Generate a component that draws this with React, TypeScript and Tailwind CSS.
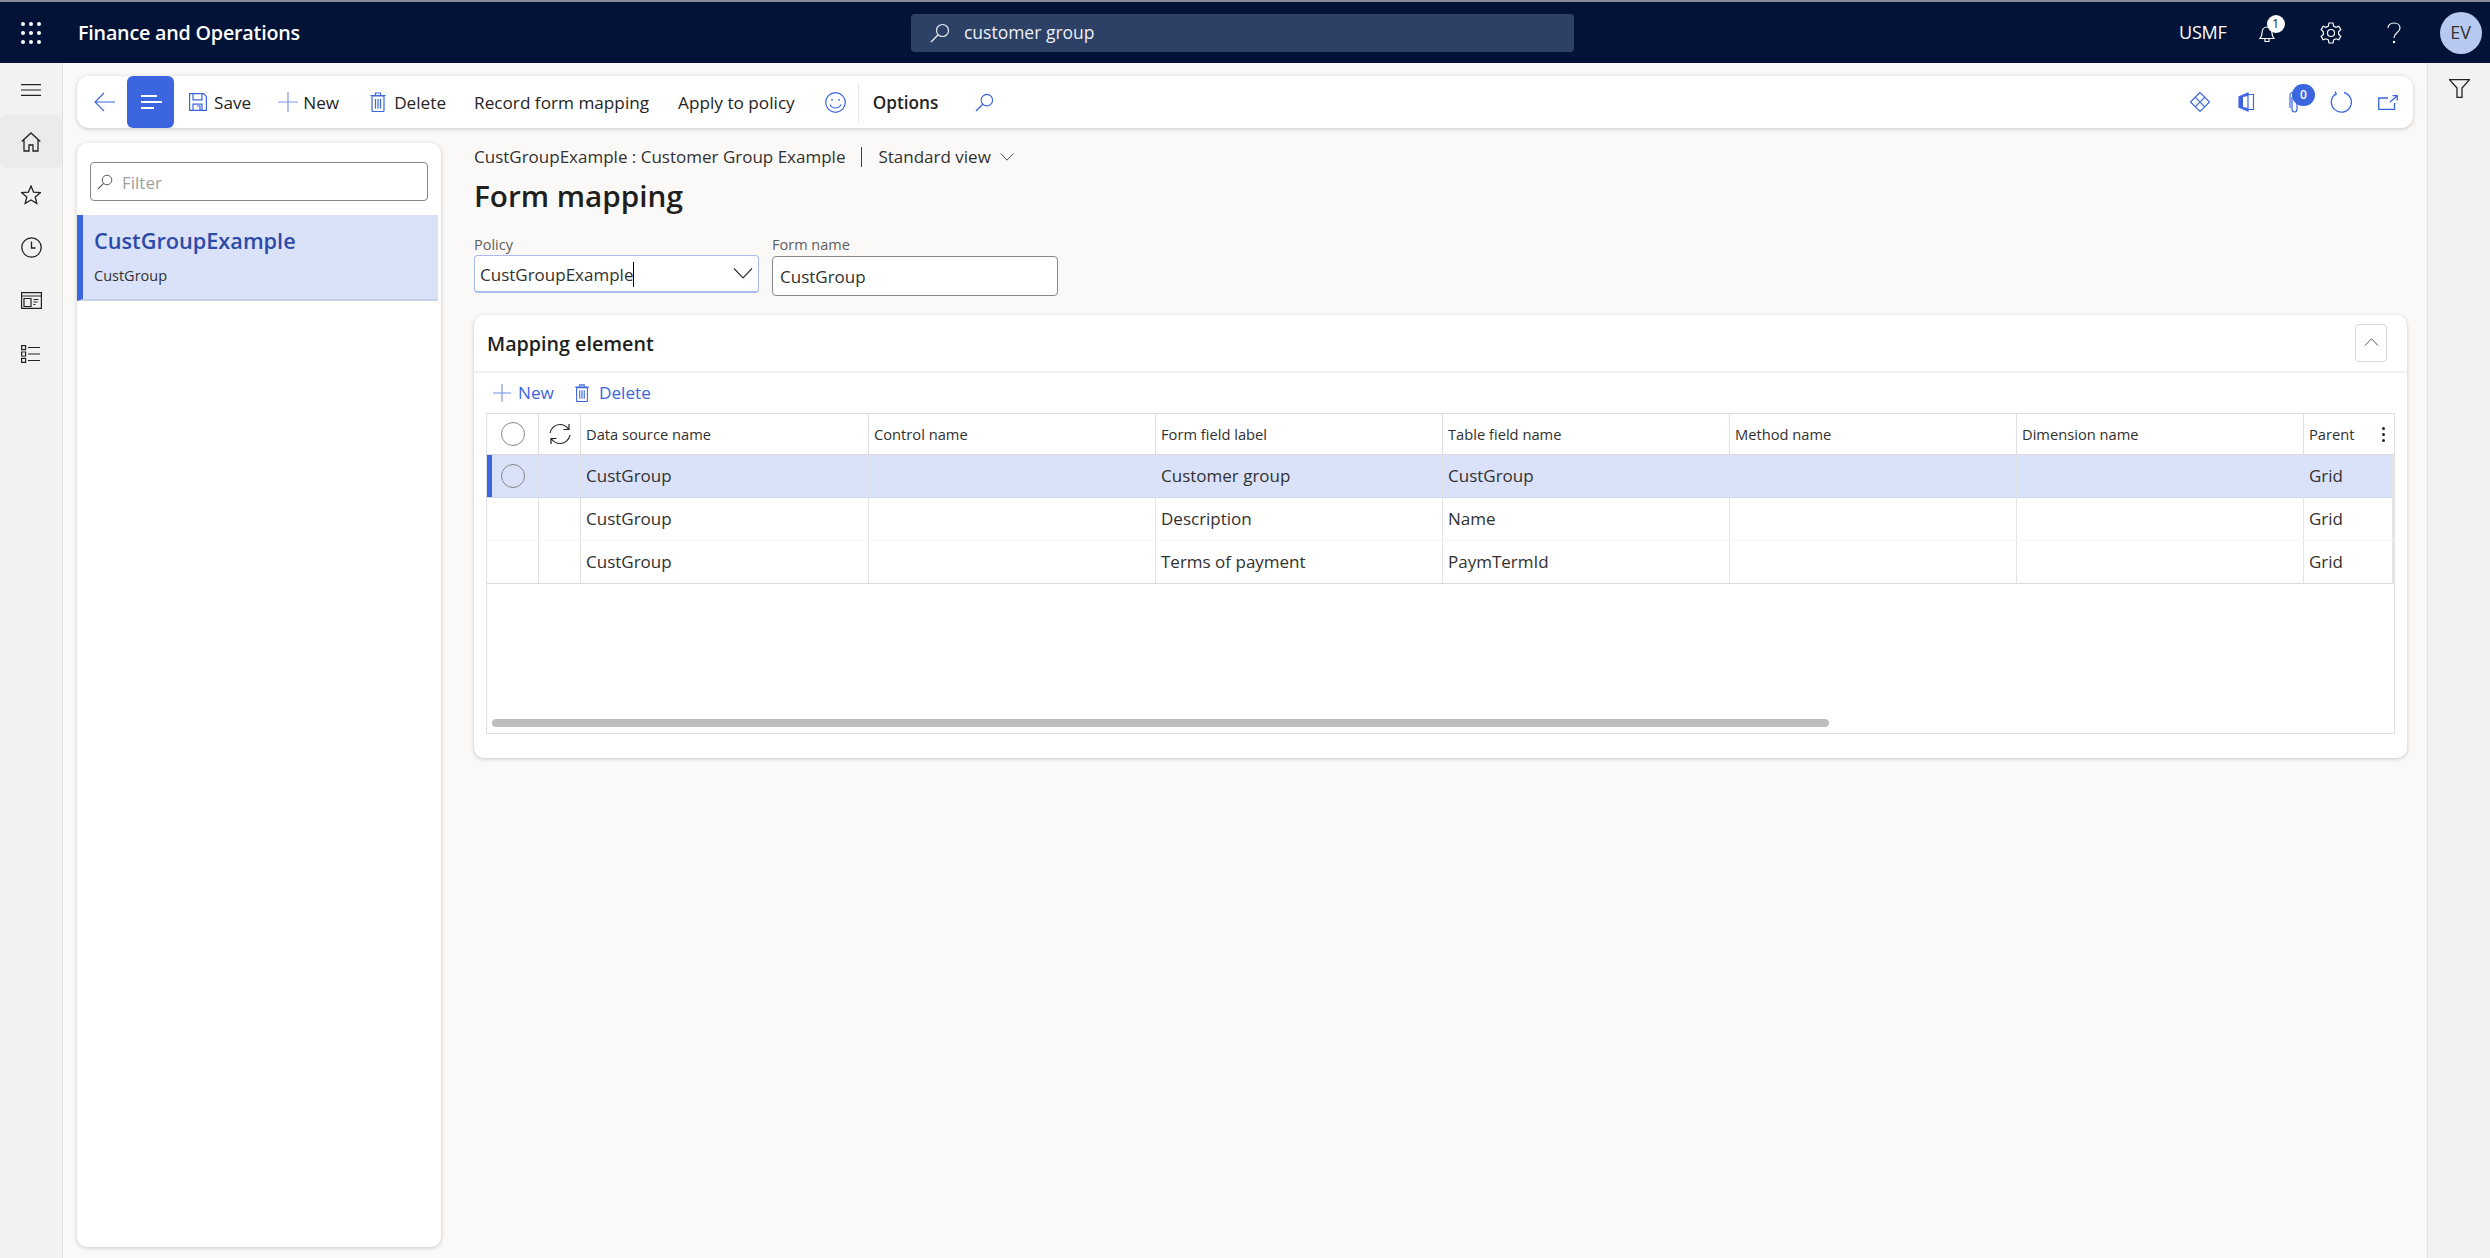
import type { ReactNode } from "react";

function Icon({ w, h, vb, className, children }: { w: number; h: number; vb: string; className?: string; children: ReactNode }) {
  return (
    <svg width={w} height={h} viewBox={vb} fill="none" stroke="currentColor" strokeWidth={1.2} className={className}>
      {children}
    </svg>
  );
}

const Search = ({ className, size = 20 }: { className?: string; size?: number }) => (
  <Icon w={size} h={size} vb="0 0 20 20" className={className}>
    <circle cx="12.5" cy="7.5" r="6" />
    <path d="M8.2 11.8 1 19" strokeWidth={1.4} />
  </Icon>
);

const Plus = ({ size = 20, className }: { size?: number; className?: string }) => (
  <Icon w={size} h={size} vb="0 0 20 20" className={className}>
    <path d="M10 0v20M0 10h20" />
  </Icon>
);

const Trash = ({ className, h = 20 }: { className?: string; h?: number }) => (
  <Icon w={16} h={h} vb="0 0 16 20" className={className}>
    <path d="M2 4h12v14.5a1 1 0 0 1-1 1H3a1 1 0 0 1-1-1zM.5 3.5h15M5.5 3V1h5v2M5.5 7v9.5M8 7v9.5M10.5 7v9.5" />
  </Icon>
);

const Save = () => (
  <Icon w={18} h={18} vb="0 0 18 18" className="text-[#3b66e0]">
    <path d="M.6.6h14l2.8 2.8v14H.6zM4 .8v6h9v-6M4 17.2v-6h9v6M8 13h3v4" />
  </Icon>
);

const Chevron = ({ w = 20, h = 11, up = false }: { w?: number; h?: number; up?: boolean }) => (
  <Icon w={w} h={h} vb="0 0 20 11">
    <path d={up ? "M1 10.5 10 1l9 9.5" : "M1 .5 10 10l9-9.5"} />
  </Icon>
);

function TopBar() {
  return (
    <header className="relative flex h-[63px] shrink-0 items-center border-t-2 border-[#8a8d96] bg-[#031338] text-white">
      <div className="ml-[21px] grid w-[20px] grid-cols-3 gap-x-[4px] gap-y-[5px]">
        {Array.from({ length: 9 }).map((_, i) => (
          <span key={i} className="h-[4px] w-[4px] rounded-full bg-white" />
        ))}
      </div>
      <span className="ml-[37px] text-[19.7px] font-semibold tracking-[-0.2px]">Finance and Operations</span>
      <div className="ml-[611px] flex h-[38px] w-[663px] items-center rounded-[4px] bg-[#2d4066] pl-[19px] text-[17.5px] text-[#eceff5]">
        <Search className="text-[#e8ebf2]" />
        <span className="ml-[14px]">customer group</span>
      </div>
      <span className="ml-[605px] text-[18px] tracking-[-0.2px]">USMF</span>
      <div className="relative ml-[32px] h-[18px] w-[16px]">
        <Icon w={16} h={19} vb="0 0 16 19">
          <path d="M1 14.5c1.4-1.5 2-2.5 2-5.5 0-3.5 2-6 5-6s5 2.500 5 6c0 3 .6 4 2 5.500zM6 15v2.500h4V15" />
        </Icon>
        <span className="absolute -top-[9px] left-[8px] flex h-[18px] w-[18px] items-center justify-center rounded-full bg-white text-[12px] text-[#222]">1</span>
      </div>
      <div className="ml-[45px]">
        <Icon w={22} h={22} vb="0 0 22 22">
          <circle cx="11" cy="11" r="3.500" />
          <path d="M9 1h4l.6 3 2.400 1.300 2.800-1 2 3.400-2.200 2 .1 2.700 2.100 2-2 3.400-2.800-1L13.600 18 13 21H9l-.6-3L6 16.800l-2.800 1-2-3.400 2.200-2-.1-2.700-2.100-2 2-3.400 2.800 1L8.400 4z" />
        </Icon>
      </div>
      <div className="ml-[45px]">
        <Icon w={14} h={22} vb="0 0 14 22">
          <path d="M1 6c0-3 2.500-5 6-5s6 2 6 5c0 4.500-6 4.500-6 10" />
          <circle cx="7" cy="20" r=".6" fill="currentColor" />
        </Icon>
      </div>
      <div className="ml-[39px] flex h-[42px] w-[42px] items-center justify-center rounded-full bg-[#b7c8f1] text-[18px] text-[#333]">EV</div>
    </header>
  );
}

const railIcons: ReactNode[] = [
  <Icon key="home" w={20} h={20} vb="0 0 20 20">
    <path d="M.7 9.500 10 1l9.300 8.500M3 8v11h5v-6h4v6h5V8" strokeWidth={1.3} />
  </Icon>,
  <Icon key="star" w={20} h={20} vb="0 0 20 20">
    <path d="m10 1 2.600 6.200 6.700.5-5.100 4.300 1.600 6.500L10 15l-5.800 3.500L5.800 12 .7 7.700l6.700-.5z" strokeWidth={1.3} />
  </Icon>,
  <Icon key="clock" w={21} h={21} vb="0 0 21 21">
    <circle cx="10.500" cy="10.500" r="9.700" strokeWidth={1.3} />
    <path d="M10.500 4.500v6.500h4" strokeWidth={1.3} />
  </Icon>,
  <Icon key="card" w={21} h={17} vb="0 0 21 17">
    <path d="M.6.600h19.800v15.800H.6zM.6 4h19.800M3 6.500h7v8H3zM12.500 7.500h5M12.500 10h4M12.500 12.500h2" />
  </Icon>,
  <Icon key="list" w={20} h={18} vb="0 0 20 18">
    <path d="M.6.600h4v4h-4zM.6 7h4v4h-4zM.6 13.400h4v4h-4zM7 2.500h12M7 9h12M7 15.500h12" />
  </Icon>,
];

function LeftRail() {
  return (
    <nav className="flex w-[63px] shrink-0 flex-col items-center border-r border-[#e4e2e0] bg-[#f3f2f1] text-[#222]">
      <div className="flex h-[52px] w-full items-center justify-center pt-[2px]">
        <Icon w={20} h={12} vb="0 0 20 12">
          <path d="M0 .6h20M0 6h20M0 11.400h20" />
        </Icon>
      </div>
      {railIcons.map((icon, i) => (
        <div key={i} className={`flex h-[53px] w-full items-center justify-center rounded-[6px] ${i === 0 ? "bg-[#edebe9]" : ""}`}>
          {icon}
        </div>
      ))}
    </nav>
  );
}

function ActionBar() {
  return (
    <div className="flex h-[52px] items-center rounded-[12px] bg-white pl-[17px] pr-[15px] text-[17.2px] text-[#252423] shadow-[0_1px_4px_rgba(0,0,0,0.2)]">
      <Icon w={21} h={20} vb="0 0 21 20" className="text-[#3b66e0]">
        <path d="M10 1 1 10l9 9M1 10h20" strokeWidth={1.1} />
      </Icon>
      <div className="ml-[12px] flex h-[52px] w-[47px] flex-col items-start justify-center gap-[4px] rounded-[6px] bg-[#3b66e0] pl-[14px]">
        <span className="h-[2px] w-[16px] bg-white" />
        <span className="h-[2px] w-[21px] bg-white" />
        <span className="h-[2px] w-[13px] bg-white" />
      </div>
      <span className="ml-[15px]"><Save /></span>
      <span className="ml-[7px] mt-[2px]">Save</span>
      <Plus className="ml-[27px] text-[#7f9aea]" />
      <span className="ml-[5px] mt-[2px]">New</span>
      <Trash className="ml-[31px] text-[#3b66e0]" />
      <span className="ml-[8px] mt-[2px]">Delete</span>
      <span className="ml-[28px] mt-[2px]">Record form mapping</span>
      <span className="ml-[29px] mt-[2px]">Apply to policy</span>
      <Icon w={21} h={21} vb="0 0 21 21" className="ml-[30px] text-[#3b66e0]">
        <circle cx="10.500" cy="10.500" r="9.800" />
        <path d="M5 12.500c1.200 2.400 3.200 3.500 5.500 3.500s4.300-1.100 5.500-3.500" />
        <path d="M7 7v1.500M14 7v1.500" strokeWidth={1.6} />
      </Icon>
      <span className="ml-[12px] h-[39px] w-px bg-[#e6e6e6]" />
      <span className="ml-[14px] mt-[2px] font-semibold">Options</span>
      <Search className="ml-[37px] text-[#3b66e0]" size={19} />
      <div className="ml-auto flex items-center">
        <Icon w={22} h={22} vb="0 0 22 22" className="text-[#3b66e0]">
          <path d="M11 1.500 1.500 11 11 20.500 20.500 11zM6.200 6.200 15.800 15.800M15.800 6.200 6.200 15.800" />
        </Icon>
        <Icon w={17} h={20} vb="0 0 17 20" className="ml-[27px] text-[#3b66e0]">
          <path d="M10 1 1 5v10l9 4zM10 2.500h5.500v15H10" fill="none" strokeWidth={1.2} />
          <path d="M10 1 1 5v10l9 4V16L5 15V5l5-1z" fill="currentColor" stroke="none" />
        </Icon>
        <div className="relative ml-[34px] h-[22px] w-[11px]">
          <Icon w={11} h={22} vb="0 0 11 22" className="text-[#3b66e0]">
            <path d="M3 6v12c0 2 1 3 2.500 3S8 20 8 18V4c0-2-1-3-2.500-3S1 2 1 4v13" />
          </Icon>
          <span className="absolute -top-[7px] left-[3px] flex h-[22px] w-[23px] items-center justify-center rounded-full bg-[#3b66e0] text-[12px] font-semibold text-white">0</span>
        </div>
        <Icon w={22} h={22} vb="0 0 22 22" className="ml-[30px] text-[#3b66e0]">
          <path d="M6 2.700A10 10 0 1 0 14 1.500M5 .5l1.300 2.500L3.500 5" strokeWidth={1.3} />
        </Icon>
        <Icon w={20} h={15} vb="0 0 20 15" className="ml-[26px] text-[#3b66e0]">
          <path d="M10 3H.7v11.300h15.800V8M12 7l7-6M14.500.7h4.800v4.800" strokeWidth={1.3} />
        </Icon>
      </div>
    </div>
  );
}

function ListPanel() {
  return (
    <aside className="mt-[15px] h-[1104px] w-[364px] shrink-0 rounded-[10px] bg-white pt-[19px] shadow-[0_1px_4px_rgba(0,0,0,0.2)]">
      <div className="mx-[13px] flex h-[39px] items-center rounded-[4px] border border-[#8a8886] pl-[6px] text-[17px] text-[#a19f9d]">
        <Search size={16} className="text-[#555]" />
        <span className="ml-[9px] mt-[2px]">Filter</span>
      </div>
      <div className="mt-[14px] mr-[3px] flex h-[86px] flex-col border-b-2 border-l-[6px] border-b-[#c8d1ea] border-l-[#3b66e0] bg-[#dae2f9] pl-[11px]">
        <span className="mt-[8px] text-[21.7px] font-semibold leading-[36px] text-[#2d4ba8]">CustGroupExample</span>
        <span className="mt-[6px] text-[14.5px] leading-[22px] text-[#323130]">CustGroup</span>
      </div>
    </aside>
  );
}

const COLS = "grid grid-cols-[52px_42px_288px_287px_287px_287px_287px_287px_1fr]";
const HEADERS = ["Data source name", "Control name", "Form field label", "Table field name", "Method name", "Dimension name", "Parent"];
const ROWS = [
  ["CustGroup", "", "Customer group", "CustGroup", "", "", "Grid"],
  ["CustGroup", "", "Description", "Name", "", "", "Grid"],
  ["CustGroup", "", "Terms of payment", "PaymTermId", "", "", "Grid"],
];

const Radio = () => <span className="h-[24px] w-[24px] rounded-full border border-[#8a8886]" />;

function Grid() {
  return (
    <div className="mx-[12px] h-[321px] border border-[#e0e0e0] text-[#323130]">
      <div className={`${COLS} h-[41px] border-b border-[#dcdcdc] text-[14.7px] font-medium`}>
        <div className="flex items-center justify-center border-r border-[#e0e0e0]"><Radio /></div>
        <div className="flex items-center justify-center border-r border-[#e0e0e0]">
          <Icon w={24} h={22} vb="0 0 24 22" className="text-[#222]">
            <path d="M2 10C3 5 7 1.500 12 1.500c3.500 0 6.500 1.700 8.500 4.500M22 12c-1 5-5 8.500-10 8.500-3.500 0-6.500-1.700-8.500-4.500M21 1v5.500h-5.500M3 21v-5.500h5.500" strokeWidth={1.2} />
          </Icon>
        </div>
        {HEADERS.map((h, i) => (
          <div key={h} className={`flex items-center justify-between pl-[5px] ${i < 6 ? "border-r border-[#e0e0e0]" : "pr-[9px]"}`}>
            <span>{h}</span>
            {i === 6 && (
              <span className="flex flex-col gap-[3px]">
                <span className="h-[3px] w-[3px] rounded-full bg-[#222]" />
                <span className="h-[3px] w-[3px] rounded-full bg-[#222]" />
                <span className="h-[3px] w-[3px] rounded-full bg-[#222]" />
              </span>
            )}
          </div>
        ))}
      </div>
      {ROWS.map((row, r) => (
        <div key={r} className={`${COLS} h-[43px] border-b text-[17px] ${r === 0 ? "border-[#d0d8f0] bg-[#dae2f9]" : r === 1 ? "border-[#f5f5f5]" : "border-[#dcdcdc]"}`}>
          <div className={`flex items-center justify-center border-r border-[#e0e0e0] ${r === 0 ? "border-l-[5px] border-l-[#3b66e0] pr-[5px]" : ""}`}>
            {r === 0 && <Radio />}
          </div>
          <div className="border-r border-[#e0e0e0]" />
          {row.map((cell, i) => (
            <div key={i} className={`flex items-center pl-[5px] ${i < 6 ? "border-r border-[#e4e4e4]" : "border-r-2 border-[#e6e6e6]"}`}>{cell}</div>
          ))}
        </div>
      ))}
      <div className="mt-[135px] ml-[5px] h-[8px] w-[1337px] rounded-full bg-[#bdbdbd]" />
    </div>
  );
}

function MappingCard() {
  return (
    <section className="mt-[19px] h-[443px] rounded-[10px] bg-white shadow-[0_1px_4px_rgba(0,0,0,0.2)]">
      <div className="flex h-[58px] items-center justify-between border-b-2 border-[#f0f0f0] pl-[13px] pr-[20px]">
        <span className="mt-[2px] text-[19.7px] font-semibold text-[#201f1e]">Mapping element</span>
        <div className="flex h-[38px] w-[32px] items-center justify-center rounded-[4px] border border-[#d6d6d6] pb-[3px] text-[#444]">
          <Chevron w={15} h={8} up />
        </div>
      </div>
      <div className="flex h-[40px] items-center pl-[19px] text-[17.2px] text-[#3b66e0]">
        <Plus size={18} className="text-[#6f8de8]" />
        <span className="ml-[7px]">New</span>
        <Trash h={18} className="ml-[20px]" />
        <span className="ml-[9px]">Delete</span>
      </div>
      <Grid />
    </section>
  );
}

function Field({ label, width, children }: { label: string; width: number; children: ReactNode }) {
  return (
    <div style={{ width }}>
      <div className="text-[14.5px] leading-[20px] text-[#605e5c]">{label}</div>
      {children}
    </div>
  );
}

function Content() {
  return (
    <div className="min-w-0 flex-1 pl-[33px] pr-[6px]">
      <div className="mt-[17px] flex h-[24px] items-center text-[17px] text-[#323130]">
        <span>CustGroupExample : Customer Group Example</span>
        <span className="ml-[16px] h-[20px] w-px bg-[#444]" />
        <span className="ml-[16px]">Standard view</span>
        <span className="ml-[9px]"><Chevron w={14} h={8} /></span>
      </div>
      <h1 className="mt-[5px] text-[29.7px] font-semibold leading-[44px] text-[#201f1e]">Form mapping</h1>
      <div className="mt-[17px] flex gap-[13px]">
        <Field label="Policy" width={285}>
          <div className="flex h-[38px] items-center justify-between rounded-[4px] border border-b-2 border-[#a9baec] bg-white pl-[5px] pr-[5px] text-[17px] text-[#323130]">
            <span className="mt-[2px] border-r border-black">CustGroupExample</span>
            <Chevron />
          </div>
        </Field>
        <Field label="Form name" width={286}>
          <div className="mt-[1px] flex h-[40px] items-center rounded-[4px] border border-[#8a8886] bg-white pl-[7px] pt-[2px] text-[17px] text-[#323130]">CustGroup</div>
        </Field>
      </div>
      <MappingCard />
    </div>
  );
}

export default function App() {
  return (
    <div className="flex h-[1258px] flex-col overflow-hidden bg-[#faf9f8] font-['Open_Sans',sans-serif]">
      <TopBar />
      <div className="flex min-h-0 flex-1">
        <LeftRail />
        <main className="min-w-0 flex-1 pl-[14px] pr-[14px] pt-[13px]">
          <ActionBar />
          <div className="flex">
            <ListPanel />
            <Content />
          </div>
        </main>
        <aside className="flex w-[63px] shrink-0 justify-center border-l border-[#e4e2e0] bg-[#f3f2f1] pt-[16px]">
          <Icon w={21} h={19} vb="0 0 21 19" className="text-[#222]">
            <path d="M.5.600h20L13 9v9.400H8V9z" strokeWidth={1.3} />
          </Icon>
        </aside>
      </div>
    </div>
  );
}
